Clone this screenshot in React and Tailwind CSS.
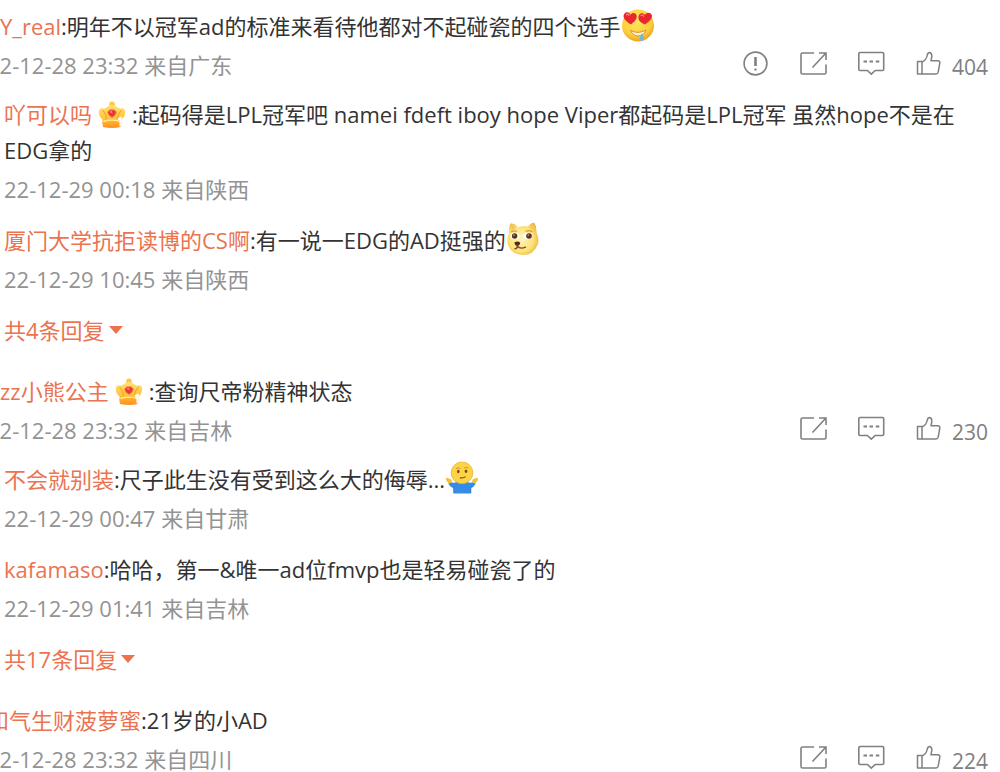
const comments = [
  {
    id: 1,
    name: 'Y_real',
    indent: true,
    text: '明年不以冠军ad的标准来看待他都对不起碰瓷的四个选手',
    emoji: 'love',
    date: '22-12-28 23:32 来自广东',
    report: true,
    likes: 404,
    more: '共4条回复',
    replies: [
      {
        id: 11,
        name: '吖可以吗',
        badge: true,
        text: '起码得是LPL冠军吧 namei fdeft iboy hope Viper都起码是LPL冠军 虽然hope不是在EDG拿的',
        date: '22-12-29 00:18 来自陕西',
      },
      {
        id: 12,
        name: '厦门大学抗拒读博的CS啊',
        text: '有一说一EDG的AD挺强的',
        emoji: 'doge',
        date: '22-12-29 10:45 来自陕西',
      },
    ],
  },
  {
    id: 2,
    name: 'zz小熊公主',
    indent: true,
    badge: true,
    text: '查询尺帝粉精神状态',
    date: '22-12-28 23:32 来自吉林',
    likes: 230,
    more: '共17条回复',
    replies: [
      {
        id: 21,
        name: '不会就别装',
        text: '尺子此生没有受到这么大的侮辱...',
        emoji: 'shrug',
        date: '22-12-29 00:47 来自甘肃',
      },
      {
        id: 22,
        name: 'kafamaso',
        text: '哈哈，第一&唯一ad位fmvp也是轻易碰瓷了的',
        date: '22-12-29 01:41 来自吉林',
      },
    ],
  },
  {
    id: 3,
    name: '和气生财菠萝蜜',
    text: '21岁的小AD',
    date: '22-12-28 23:32 来自四川',
    likes: 224,
    replies: [],
  },
];

function Crown() {
  return (
    <svg viewBox="0 0 28 28" className="mx-1.5 -mt-1 inline-block size-7" aria-hidden="true">
      <defs>
        <linearGradient id="crown" x1="0" y1="0" x2="0" y2="1">
          <stop offset="0" stopColor="#ffe27a" />
          <stop offset="0.55" stopColor="#ffc63a" />
          <stop offset="1" stopColor="#ff8f20" />
        </linearGradient>
      </defs>
      <circle cx="14" cy="3.4" r="2.8" fill="#ffc93f" />
      <path
        d="M5 26 Q3.8 22 4.6 18.5 Q.8 15.5 .8 11 Q.8 7.4 4 7.2 Q7 8 9 6 Q11.5 4 14 4 Q16.5 4 19 6 Q21 8 24 7.2 Q27.2 7.4 27.2 11 Q27.2 15.5 23.4 18.5 Q24.2 22 23 26 Q14 27.8 5 26Z"
        fill="url(#crown)"
      />
      <path d="M4.5 9.5 Q8 12 8.5 18 M23.5 9.5 Q20 12 19.5 18" fill="none" stroke="#f9a62a" strokeWidth="1.1" />
      <path d="M5.5 20.5 Q14 17.8 22.5 20.5" fill="none" stroke="#fff0a0" strokeWidth="1.4" />
      <path d="M9.5 11 L11.8 8.8 L16.2 8.8 L18.5 11 L17.2 14.2 L14 16.6 L10.8 14.2Z" fill="#e83a2f" stroke="#ff8a4a" />
      <path d="M11.5 10.8 L13.5 9.9 L14.5 12.3Z" fill="#ff9fae" />
      <path d="M20 18.4 L22.6 17 V25.5" fill="none" stroke="#fff" strokeWidth="2.2" />
    </svg>
  );
}

function Love() {
  return (
    <svg viewBox="0 0 34 34" className="-mt-2 inline-block size-[34px]" role="img" aria-label="色">
      <defs>
        <radialGradient id="love" cx="0.45" cy="0.35" r="0.65">
          <stop offset="0" stopColor="#ffe564" />
          <stop offset="0.7" stopColor="#fdd03b" />
          <stop offset="1" stopColor="#e9a421" />
        </radialGradient>
      </defs>
      <circle cx="17" cy="17.5" r="16" fill="url(#love)" />
      <path d="M10 16.5 C4 13 1.5 9.5 3 6.3 C4.7 3.2 8.3 3.8 9.5 6.7 C11.5 4 15.3 4.8 15.7 8 C16 11.5 13 14 10 16.5Z" fill="#e9272d" />
      <path d="M24 16.5 C18 14 16.8 11 17.7 7.7 C18.8 4.8 22.4 4.6 24 7 C25.3 4 29.3 4 30.7 6.8 C32 10 28.5 13.6 24 16.5Z" fill="#e9272d" />
      <path d="M5.5 6.8 Q7 5.3 8 7.3 M20 7.5 Q21.8 6.4 22.6 8.3" fill="none" stroke="#ff8582" strokeWidth="1.3" strokeLinecap="round" />
      <path d="M9.5 22.5 Q17 26.5 25 22 Q22.5 28 17 28 Q11.5 27.5 9.5 22.5Z" fill="#fff4d0" stroke="#c98a2c" strokeWidth=".9" />
      <path d="M20.5 25.5 Q23.8 28.5 22.5 32 Q20.5 34 18.8 31.8 Q18.6 29 20.5 25.5Z" fill="#6ab8ea" />
    </svg>
  );
}

function Doge() {
  return (
    <svg viewBox="0 0 34 34" className="-mt-2 inline-block size-[34px]" role="img" aria-label="doge">
      <defs>
        <radialGradient id="doge" cx="0.45" cy="0.5" r="0.6">
          <stop offset="0" stopColor="#fff5bd" />
          <stop offset="0.65" stopColor="#fce27a" />
          <stop offset="1" stopColor="#edb53a" />
        </radialGradient>
      </defs>
      <path
        d="M3.2 11 Q2.5 3 5.2 1.3 Q9 1.5 12 5 Q17 3.3 22 4.5 Q25 0.5 28.3 .7 Q30.8 4 30.5 10.5 Q33.8 17 31.5 23 Q27.5 33 17 33 Q6 32.5 2.4 24 Q0 17 3.2 11Z"
        fill="url(#doge)"
      />
      <path d="M5.6 8.5 Q5 4.5 6.3 3.3 Q8.5 3.8 10 6Z M24.5 5.5 Q26 3.2 27.7 3 Q28.8 5 28.6 8.5Z" fill="#f0c569" />
      <ellipse cx="9" cy="14" rx="4.6" ry="3.2" fill="#fffdf2" />
      <ellipse cx="21.5" cy="14" rx="4.8" ry="3.2" fill="#fffdf2" />
      <circle cx="8.6" cy="14" r="2.7" fill="#5a3020" />
      <circle cx="23" cy="14" r="2.8" fill="#5a3020" />
      <circle cx="7.9" cy="13.1" r=".7" fill="#fff" />
      <circle cx="22.2" cy="13.1" r=".7" fill="#fff" />
      <path d="M5.5 9.8 Q8 8.2 10.5 9.3 M20 9.3 Q23 8 26 9.5" fill="none" stroke="#d69b35" strokeWidth="1.2" strokeLinecap="round" />
      <path d="M8.3 20.5 Q12 18.2 14.2 20.8 Q14 23.8 11 24 Q8.5 23.3 8.3 20.5Z" fill="#56291b" />
      <path d="M8.8 26.8 Q11.5 26.5 11.3 24 Q14 27.5 19.5 25.2" fill="none" stroke="#82411f" strokeWidth="1.3" strokeLinecap="round" />
    </svg>
  );
}

function Shrug() {
  return (
    <svg viewBox="0 0 34 34" className="-mt-2 inline-block size-[34px]" role="img" aria-label="摊手">
      <path d="M4.5 20.5 Q9 23 12 20.5 H22 Q25 23 29.5 20.5 L30.5 23 Q28.5 26.5 26 27 V32.5 H8.5 V27 Q5.5 26.5 3.5 23Z" fill="#368ce8" />
      <path d="M8.8 25.5 V32 M25.8 25.5 V32" stroke="#2b7bd6" strokeWidth=".8" />
      <path d="M1 18 Q.8 16 2.8 17 L6.3 18.4 Q7.8 20 6 21.8 L3.8 22.6 Q1.2 20.5 1 18Z M33 18 Q33.2 16 31.2 17 L27.7 18.4 Q26.2 20 28 21.8 L30.2 22.6 Q32.8 20.5 33 18Z" fill="#f5bf32" />
      <circle cx="17" cy="11.8" r="10.8" fill="#fcd445" stroke="#eab434" strokeWidth=".8" />
      <ellipse cx="13.3" cy="10.5" rx="1.3" ry="1.7" fill="#7c4a18" />
      <ellipse cx="21" cy="10.2" rx="1.3" ry="1.7" fill="#7c4a18" />
      <path d="M11.2 7.3 Q13.3 6.3 15 7.3 M19.5 6.8 Q21.3 5.7 23 6.8" fill="none" stroke="#c78d2b" strokeWidth=".9" strokeLinecap="round" />
      <path d="M15.5 17 Q18 16.9 20.2 16" fill="none" stroke="#94521a" strokeWidth="1.3" strokeLinecap="round" />
    </svg>
  );
}

const emojis = { love: Love, doge: Doge, shrug: Shrug };

function Line({ item }) {
  const Emoji = emojis[item.emoji];

  return (
    <p className="text-[22px] leading-9 text-[#333333]">
      <a href="#" className="text-[#eb7350]">{item.name}</a>
      {item.badge && <Crown />}:{item.text}
      {Emoji && <Emoji />}
    </p>
  );
}

function Actions({ item }) {
  return (
    <div className="flex items-center gap-8 text-[#808080]">
      {item.report && (
        <button type="button" aria-label="举报">
          <svg viewBox="0 0 26 26" className="-mt-0.5 size-[26px]" fill="none" stroke="currentColor" strokeWidth="1.6">
            <circle cx="13.5" cy="12.5" r="11.4" />
            <path d="M13.5 6 V15" strokeWidth="2.6" />
            <path d="M13.5 17.5 V19.5" strokeWidth="2.2" />
          </svg>
        </button>
      )}
      <button type="button" aria-label="转发">
        <svg viewBox="0 0 26 26" className="-mt-0.5 size-[26px] overflow-visible" fill="none" stroke="currentColor" strokeWidth="1.6">
          <path d="M14 2 H2.5 Q1 2 1 3.5 V21.5 Q1 23 2.5 23 H24.5 Q26 23 26 21.5 V13.5" />
          <path d="M12.5 16.5 L25.5 2.5 M19 2 H26 V9" />
        </svg>
      </button>
      <button type="button" aria-label="评论">
        <svg viewBox="0 0 26 26" className="-mt-0.5 size-[26px] overflow-visible" fill="none" stroke="currentColor" strokeWidth="1.6">
          <path d="M2 1.5 H24.5 Q25.7 1.5 25.7 2.7 V18.3 Q25.7 19.5 24.5 19.5 H17.2 L13.3 23.2 L9.4 19.5 H2 Q.8 19.5 .8 18.3 V2.7 Q.8 1.5 2 1.5Z" />
          <path d="M5.5 10.5 H9 M11.5 10.5 H15 M17.8 10.5 H21.3" strokeWidth="1.8" />
        </svg>
      </button>
      <button type="button" aria-label="赞" className="flex items-center gap-2.5">
        <svg viewBox="0 0 26 26" className="-mt-0.5 size-[26px]" fill="none" stroke="currentColor" strokeWidth="1.5" strokeLinejoin="round">
          <path d="M1.5 10.5 H6 V23 H1.5Z" />
          <path d="M6 11 Q10.5 9 11.3 4 Q11.8 1.5 13.6 1.5 Q16 1.8 15.8 5.5 L15 9.8 H21.8 Q24.2 10 23.8 12.2 L22.2 21.2 Q21.8 23 20 23 H6" />
        </svg>
        <span className="pt-1 text-[21px] leading-7">{item.likes}</span>
      </button>
    </div>
  );
}

function Comment({ item }) {
  return (
    <article>
      <div className={item.indent ? 'pl-[13px]' : ''}>
        <Line item={item} />
      </div>
      <div className="mt-[7px] flex h-7 items-center justify-between pr-3">
        <time className="text-[22px] leading-7 text-[#939393]">{item.date}</time>
        <Actions item={item} />
      </div>

      {item.replies.length > 0 && (
        <div className="mt-[17px] flex flex-col gap-[19px] pr-8 pl-[17px]">
          {item.replies.map(reply => (
            <div key={reply.id}>
              <Line item={reply} />
              <time className="mt-[7px] block text-[22px] leading-7 text-[#939393]">
                {reply.date}
              </time>
            </div>
          ))}
          <button
            type="button"
            className="flex items-center gap-1 self-start text-[22px] leading-9 text-[#eb7350]"
          >
            {item.more}
            <svg viewBox="0 0 14 8" className="h-2 w-3.5" fill="currentColor" aria-hidden="true">
              <path d="M0 0 H14 L7 8Z" />
            </svg>
          </button>
        </div>
      )}
    </article>
  );
}

export default function App() {
  return (
    <main className="overflow-hidden bg-white font-['Open_Sans','Noto_Sans_CJK_SC',sans-serif]">
      <div className="-ml-[13px] flex flex-col gap-[25px] pt-2">
        {comments.map(item => (
          <Comment key={item.id} item={item} />
        ))}
      </div>
    </main>
  );
}
